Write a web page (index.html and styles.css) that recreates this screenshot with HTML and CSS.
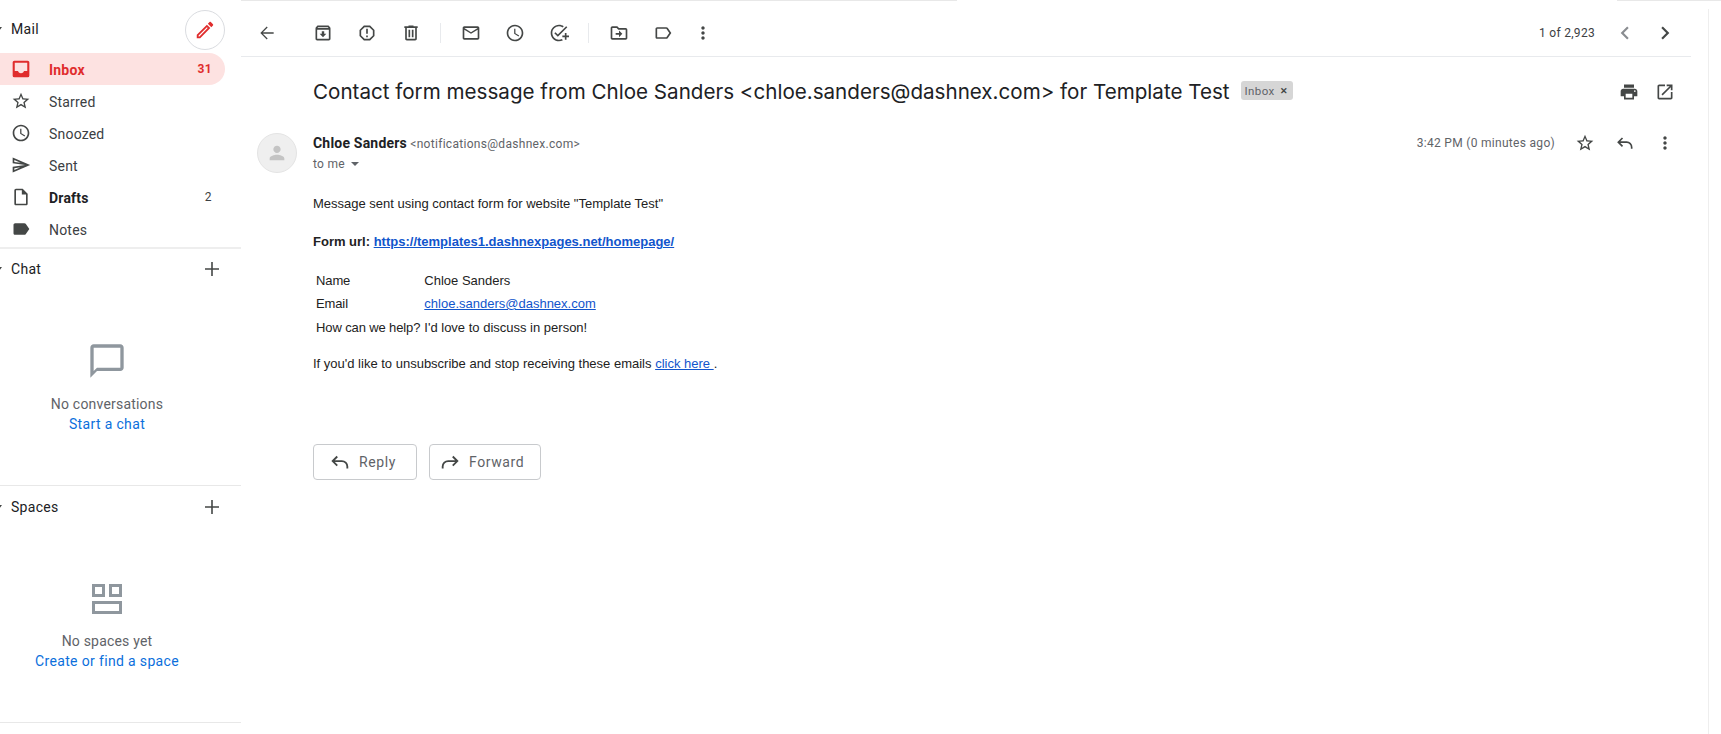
FILE: index.html
```html
<!DOCTYPE html>
<html lang="en">

<head>
    <meta charset="UTF-8">
    <meta name="viewport" content="width=device-width, initial-scale=1.0">
    <title>Contact form message</title>
    <link rel="stylesheet" href="styles.css">
</head>

<body>
    <div class="top-edge">
        <span class="edge-left"></span>
        <span class="edge-right"></span>
    </div>
    <div class="app">
        <aside class="sidebar">
            <div class="mail-head">
                <span class="caret"></span>
                <span class="section-title">Mail</span>
                <button class="compose">
                    <svg class="icon icon-red" viewBox="0 0 24 24"><path d="M3 17.25V21h3.75L17.81 9.94l-3.75-3.75L3 17.25zM5.900 19H5v-.9l9.060-9.060.9.9L5.900 19zM20.710 7.040c.39-.39.39-1.020 0-1.410l-2.340-2.340c-.39-.39-1.020-.39-1.410 0l-1.830 1.830 3.750 3.750 1.830-1.830z"/></svg>
                </button>
            </div>
            <nav class="nav">
                <a class="nav-row active">
                    <svg class="icon" viewBox="0 0 24 24"><path d="M20 2H4a2 2 0 0 0-2 2v16a2 2 0 0 0 2 2h16a2 2 0 0 0 2-2V4a2 2 0 0 0-2-2zm-.5 12.500h-4c0 1.500-1.500 2.500-3.500 2.500s-3.500-1-3.500-2.500h-4v-10h15z"/></svg>
                    <span class="nav-label">Inbox</span>
                    <span class="nav-count">31</span>
                </a>
                <a class="nav-row">
                    <svg class="icon" viewBox="0 0 24 24"><path d="M22 9.24l-7.19-.62L12 2 9.19 8.63 2 9.24l5.46 4.73L5.82 21 12 17.27 18.18 21l-1.63-7.03L22 9.24zM12 15.4l-3.76 2.27 1-4.28-3.32-2.88 4.38-.38L12 6.1l1.71 4.04 4.38.38-3.32 2.88 1 4.28L12 15.4z"/></svg>
                    <span class="nav-label">Starred</span>
                </a>
                <a class="nav-row">
                    <svg class="icon" viewBox="0 0 24 24"><path d="M11.99 2C6.47 2 2 6.48 2 12s4.47 10 9.99 10C17.52 22 22 17.52 22 12S17.52 2 11.99 2zM12 20c-4.42 0-8-3.58-8-8s3.58-8 8-8 8 3.58 8 8-3.58 8-8 8zm.5-13H11v6l5.25 3.15.75-1.23-4.5-2.67z"/></svg>
                    <span class="nav-label">Snoozed</span>
                </a>
                <a class="nav-row">
                    <svg class="icon" viewBox="0 0 24 24"><path d="M4 6.03l7.51 3.22-7.52-1 .01-2.22m7.5 8.72L4 17.97v-2.22l7.51-1M2.01 3L2 10l15 2-15 2 .01 7L23 12 2.01 3z"/></svg>
                    <span class="nav-label">Sent</span>
                </a>
                <a class="nav-row bold">
                    <svg class="icon" viewBox="0 0 24 24"><path d="M14 2H6c-1.1 0-2 .9-2 2v16c0 1.1.9 2 2 2h12c1.1 0 2-.9 2-2V8l-6-6zM6 20V4h7v5h5v11H6z"/></svg>
                    <span class="nav-label">Drafts</span>
                    <span class="nav-count">2</span>
                </a>
                <a class="nav-row">
                    <svg class="icon" viewBox="0 0 24 24"><path d="M17.63 5.84C17.27 5.33 16.67 5 16 5L5 5.01C3.9 5.01 3 5.9 3 7v10c0 1.1.9 1.99 2 1.99L16 19c.67 0 1.27-.33 1.63-.84L22 12l-4.37-6.16z"/></svg>
                    <span class="nav-label">Notes</span>
                </a>
            </nav>

            <section class="panel panel-chat">
                <div class="panel-head">
                    <span class="caret"></span>
                    <span class="section-title">Chat</span>
                    <svg class="icon plus" viewBox="0 0 24 24"><path d="M19 12.8h-6.200v6.200h-1.600v-6.200H5v-1.600h6.200V5h1.600v6.200H19z"/></svg>
                </div>
                <div class="empty">
                    <svg class="empty-icon" viewBox="0 0 24 24"><path d="M20 2H4c-1.100 0-2 .9-2 2v18l4-4h14c1.100 0 2-.9 2-2V4c0-1.100-.9-2-2-2zm0 14H6l-2 2V4h16v12z"/></svg>
                    <p class="empty-text">No conversations</p>
                    <a class="empty-link">Start a chat</a>
                </div>
            </section>

            <section class="panel panel-spaces">
                <div class="panel-head">
                    <span class="caret"></span>
                    <span class="section-title">Spaces</span>
                    <svg class="icon plus" viewBox="0 0 24 24"><path d="M19 12.8h-6.200v6.200h-1.600v-6.200H5v-1.600h6.200V5h1.600v6.200H19z"/></svg>
                </div>
                <div class="empty">
                    <svg class="spaces-icon" viewBox="0 0 30 30"><path d="M0 0h13v13H0zM3 3v7h7V3zM17 0h13v13H17zM20 3v7h7V3zM0 17h30v13H0zM3 20v7h24v-7z" fill-rule="evenodd"/></svg>
                    <p class="empty-text">No spaces yet</p>
                    <a class="empty-link">Create or find a space</a>
                </div>
            </section>
        </aside>

        <main class="main">
            <div class="toolbar">
                <button class="tool back"><svg class="icon" viewBox="0 0 24 24"><path d="M20 11.200H7L12.800 5.400 11.700 4.300 4 12l7.700 7.700 1.100-1.100L7 12.800h13z"/></svg></button>
                <button class="tool"><svg class="icon" viewBox="0 0 24 24"><path d="M20.540 5.230l-1.390-1.680C18.880 3.210 18.470 3 18 3H6c-.47 0-.88.210-1.160.55L3.460 5.230C3.170 5.570 3 6.020 3 6.500V19c0 1.100.9 2 2 2h14c1.100 0 2-.9 2-2V6.500c0-.48-.17-.93-.46-1.270zM6.240 5h11.520l.83 1H5.420l.82-1zM5 19V8h14v11H5zm8.450-9h-2.900v3H8l4 4 4-4h-2.550z"/></svg></button>
                <button class="tool"><svg class="icon" viewBox="0 0 24 24"><path d="M15.730 3H8.270L3 8.270v7.460L8.270 21h7.460L21 15.730V8.270L15.730 3zM19 14.900L14.900 19H9.100L5 14.900V9.100L9.100 5h5.800L19 9.100v5.800zM11 15h2v2h-2zm0-8h2v6h-2z"/></svg></button>
                <button class="tool"><svg class="icon" viewBox="0 0 24 24"><path d="M15 4V3H9v1H4v2h1v13c0 1.100.9 2 2 2h10c1.100 0 2-.9 2-2V6h1V4h-5zm2 15H7V6h10v13zM9 8h2v9H9zm4 0h2v9h-2z"/></svg></button>
                <span class="divider"></span>
                <button class="tool"><svg class="icon" viewBox="0 0 24 24"><path d="M20 4H4c-1.100 0-2 .9-2 2v12c0 1.100.9 2 2 2h16c1.100 0 2-.9 2-2V6c0-1.100-.9-2-2-2zm0 14H4V8l8 5 8-5v10zm-8-7L4 6h16l-8 5z"/></svg></button>
                <button class="tool"><svg class="icon" viewBox="0 0 24 24"><path d="M11.990 2C6.470 2 2 6.480 2 12s4.470 10 9.990 10C17.520 22 22 17.520 22 12S17.520 2 11.990 2zM12 20c-4.420 0-8-3.580-8-8s3.580-8 8-8 8 3.580 8 8-3.580 8-8 8zm.5-13H11v6l5.250 3.150.75-1.230-4.500-2.670z"/></svg></button>
                <button class="tool"><svg class="icon" viewBox="0 0 24 24"><path d="M22 5.180L10.590 16.600l-4.240-4.240 1.410-1.410 2.830 2.830 10-10L22 5.180zM12 20c-4.410 0-8-3.590-8-8s3.590-8 8-8c1.570 0 3.040.46 4.280 1.250l1.450-1.450C16.100 2.670 14.130 2 12 2 6.480 2 2 6.480 2 12s4.480 10 10 10c1.730 0 3.360-.44 4.780-1.220l-1.500-1.500c-1 .46-2.110.72-3.280.72zm7-5h-3v2h3v3h2v-3h3v-2h-3v-3h-2v3z"/></svg></button>
                <span class="divider"></span>
                <button class="tool"><svg class="icon" viewBox="0 0 24 24"><path d="M20 6h-8l-2-2H4c-1.100 0-2 .9-2 2v12c0 1.100.9 2 2 2h16c1.100 0 2-.9 2-2V8c0-1.100-.9-2-2-2zm0 12H4V6h5.170l2 2H20v10zm-8-4H8v-2h4V9l4 4-4 4v-3z"/></svg></button>
                <button class="tool"><svg class="icon" viewBox="0 0 24 24"><path d="M17.630 5.840C17.270 5.330 16.670 5 16 5L5 5.010C3.900 5.010 3 5.900 3 7v10c0 1.100.9 1.990 2 1.990L16 19c.67 0 1.270-.33 1.630-.84L22 12l-4.370-6.160zM16 17H5V7h11l3.550 5L16 17z"/></svg></button>
                <button class="tool more"><svg class="icon" viewBox="0 0 24 24"><path d="M12 8c1.100 0 2-.9 2-2s-.9-2-2-2-2 .9-2 2 .9 2 2 2zm0 2c-1.100 0-2 .9-2 2s.9 2 2 2 2-.9 2-2-.9-2-2-2zm0 6c-1.100 0-2 .9-2 2s.9 2 2 2 2-.9 2-2-.9-2-2-2z"/></svg></button>
                <span class="pager">1 of 2,923</span>
                <button class="tool chevron tool-dim"><svg class="icon" viewBox="0 0 24 24"><path d="M15.410 7.410L14 6l-6 6 6 6 1.410-1.410L10.830 12z"/></svg></button>
                <button class="tool chevron pager-next"><svg class="icon" viewBox="0 0 24 24"><path d="M10 6L8.590 7.410 13.170 12l-4.580 4.590L10 18l6-6z"/></svg></button>
            </div>

            <div class="subject-row">
                <h1 class="subject">Contact form message from Chloe Sanders &lt;chloe.sanders@dashnex.com&gt; for Template Test</h1>
                <span class="badge">Inbox <span class="badge-x">&#10005;</span></span>
                <svg class="icon print" viewBox="0 0 24 24"><path d="M19 8H5c-1.660 0-3 1.340-3 3v6h4v4h12v-4h4v-6c0-1.660-1.340-3-3-3zm-3 11H8v-5h8v5zm3-7c-.55 0-1-.45-1-1s.45-1 1-1 1 .45 1 1-.45 1-1 1zm-1-9H6v4h12V3z"/></svg>
                <svg class="icon popout" viewBox="0 0 24 24"><path d="M19 19H5V5h7V3H5c-1.110 0-2 .9-2 2v14c0 1.100.89 2 2 2h14c1.100 0 2-.9 2-2v-7h-2v7zM14 3v2h3.590l-9.830 9.830 1.410 1.410L19 6.410V10h2V3h-7z"/></svg>
            </div>

            <div class="message">
                <div class="avatar">
                    <svg viewBox="0 0 24 24"><path d="M12 12c2.210 0 4-1.790 4-4s-1.790-4-4-4-4 1.790-4 4 1.790 4 4 4zm0 2c-2.670 0-8 1.340-8 4v2h16v-2c0-2.660-5.330-4-8-4z"/></svg>
                </div>
                <div class="msg-col">
                    <div class="msg-head">
                        <div class="sender">
                            <div class="from"><strong>Chloe Sanders</strong> <span class="addr">&lt;notifications@dashnex.com&gt;</span></div>
                            <div class="to">to me <span class="to-caret"></span></div>
                        </div>
                        <span class="time">3:42 PM (0 minutes ago)</span>
                        <svg class="icon msg-star" viewBox="0 0 24 24"><path d="M22 9.240l-7.190-.62L12 2 9.190 8.630 2 9.240l5.460 4.730L5.820 21 12 17.270 18.180 21l-1.630-7.030L22 9.240zM12 15.400l-3.760 2.270 1-4.280-3.320-2.880 4.380-.38L12 6.100l1.710 4.040 4.380.38-3.320 2.880 1 4.280L12 15.400z"/></svg>
                        <svg class="icon msg-reply" viewBox="0 0 24 24"><path d="M9 6L4 11l5 5M4 11h10a6 6 0 0 1 6 6v2" fill="none" stroke="currentColor" stroke-width="2"/></svg>
                        <svg class="icon msg-more" viewBox="0 0 24 24"><path d="M12 8c1.100 0 2-.9 2-2s-.9-2-2-2-2 .9-2 2 .9 2 2 2zm0 2c-1.100 0-2 .9-2 2s.9 2 2 2 2-.9 2-2-.9-2-2-2zm0 6c-1.100 0-2 .9-2 2s.9 2 2 2 2-.9 2-2-.9-2-2-2z"/></svg>
                    </div>

                    <div class="mail-body">
                        <p class="line-intro">Message sent using contact form for website "Template Test"</p>
                        <p class="line-url"><b>Form url: <a href="#">https://templates1.dashnexpages.net/homepage/</a></b></p>
                        <table class="fields">
                            <tr class="row-name">
                                <td>Name</td>
                                <td>Chloe Sanders</td>
                            </tr>
                            <tr class="row-email">
                                <td>Email</td>
                                <td><a href="#">chloe.sanders@dashnex.com</a></td>
                            </tr>
                            <tr>
                                <td>How can we help?</td>
                                <td>I'd love to discuss in person!</td>
                            </tr>
                        </table>
                        <p class="line-unsub">If you'd like to unsubscribe and stop receiving these emails <a href="#">click here </a>.</p>
                    </div>

                    <div class="actions">
                        <button class="action-btn btn-reply">
                            <svg class="icon" viewBox="0 0 24 24"><path d="M9 6L4 11l5 5M4 11h10a6 6 0 0 1 6 6v2" fill="none" stroke="currentColor" stroke-width="2"/></svg>
                            Reply
                        </button>
                        <button class="action-btn btn-forward">
                            <svg class="icon" viewBox="0 0 24 24"><path d="M15 6l5 5-5 5M20 11H10a6 6 0 0 0-6 6v2" fill="none" stroke="currentColor" stroke-width="2"/></svg>
                            Forward
                        </button>
                    </div>
                </div>
            </div>
        </main>

        <div class="rail"></div>
    </div>
</body>

</html>
```

FILE: styles.css
```css
html,
body {
    margin: 0;
    padding: 0;
    height: 100%;
    overflow: hidden;
    background: #fff;
    font-family: "Roboto", "Liberation Sans", sans-serif;
    color: #202124;
}

button {
    border: none;
    background: none;
    padding: 0;
    font-family: inherit;
    cursor: pointer;
}

p {
    margin: 0;
}

.icon {
    display: block;
    width: 24px;
    height: 24px;
    flex: none;
    fill: currentColor;
}

.icon-red {
    color: #e02d2d;
}

.top-edge {
    display: flex;
    height: 1px;
}

.edge-left {
    width: 716px;
    margin-left: 241px;
    background: #e8e8e8;
}

.edge-right {
    width: 104px;
    margin-left: auto;
    background: #e8e8e8;
}

.app {
    display: flex;
    height: 733px;
}

/* left column */
.sidebar {
    width: 241px;
    flex: none;
    display: flex;
    flex-direction: column;
}

.caret {
    width: 0;
    height: 0;
    margin-left: -4px;
    margin-right: 9px;
    border-left: 3.5px solid transparent;
    border-right: 3.5px solid transparent;
    border-top: 4px solid #444746;
    flex: none;
}

.section-title {
    font-size: 14px;
    letter-spacing: 0.3px;
    color: #202124;
}

.mail-head {
    display: flex;
    align-items: center;
    height: 52px;
    padding-top: 3px;
    box-sizing: border-box;
    padding-right: 16px;
}

.compose {
    margin-left: auto;
    width: 40px;
    height: 40px;
    margin-top: 2px;
    border: 1px solid #dadce0;
    border-radius: 50%;
    display: flex;
    align-items: center;
    justify-content: center;
}

.compose .icon {
    width: 22px;
    height: 22px;
}

.nav {
    width: 225px;
    display: flex;
    flex-direction: column;
}

.nav-row {
    display: flex;
    align-items: center;
    height: 32px;
    padding: 0 13px 0 11px;
    font-size: 14px;
    letter-spacing: 0.2px;
    color: #3c4043;
}

.nav-row .icon {
    width: 20px;
    height: 20px;
    margin-right: 18px;
    color: #444746;
}

.nav-label {
    margin-top: 1px;
}

.nav-count {
    margin-left: auto;
    font-size: 12px;
    letter-spacing: 0.4px;
}

.nav-row.active {
    background: #fde2e1;
    border-radius: 0 16px 16px 0;
    color: #e02d2d;
    font-weight: 700;
}

.nav-row.active .icon {
    color: #e02d2d;
}

.nav-row.bold {
    font-weight: 700;
    color: #202124;
}

.nav-row.bold .nav-count {
    font-weight: 400;
    color: #3c4043;
}

.panel {
    display: flex;
    flex-direction: column;
    border-top: 2px solid #eeeeee;
}

.panel-chat {
    height: 238px;
    margin-top: 2px;
    box-sizing: border-box;
}

.panel-spaces {
    height: 238px;
    box-sizing: border-box;
    border-top: 1px solid #e8e8e8;
    border-bottom: 1px solid #e8e8e8;
}

.panel-head {
    display: flex;
    align-items: center;
    height: 40px;
    padding-right: 17px;
}

.panel-spaces .panel-head {
    height: 41px;
}

.plus {
    margin-left: auto;
    color: #444746;
}

.empty {
    width: 214px;
    display: flex;
    flex-direction: column;
    align-items: center;
    font-size: 14px;
    letter-spacing: 0.2px;
    line-height: 20px;
}

.empty-icon {
    width: 40px;
    height: 40px;
    margin-top: 52px;
    fill: #8f979e;
}

.spaces-icon {
    width: 30px;
    height: 30px;
    margin-top: 57px;
    fill: #8f979e;
}

.empty-text {
    margin-top: 13px;
    color: #5f6368;
}

.spaces-icon + .empty-text {
    margin-top: 17px;
}

.empty-link {
    letter-spacing: 0.35px;
    color: #0b6fdc;
}

/* main column */
.main {
    width: 1450px;
    flex: none;
}

.toolbar {
    display: flex;
    align-items: center;
    height: 56px;
    padding: 9px 0 0 4px;
    box-sizing: border-box;
    border-bottom: 1px solid #e8eaed;
    color: #444746;
}

.tool {
    width: 44px;
    height: 40px;
    display: flex;
    align-items: center;
    justify-content: center;
    color: #444746;
}

.tool .icon {
    width: 20px;
    height: 20px;
}

.tool.chevron .icon {
    width: 26px;
    height: 26px;
}

.back {
    margin-right: 12px;
}

.divider {
    width: 1px;
    height: 20px;
    margin: 0 8px 0 7px;
    background: #e8eaed;
}

.more {
    margin-left: -4px;
}

.pager {
    margin-left: auto;
    margin-right: 8px;
    font-size: 12px;
    letter-spacing: 0.3px;
    color: #3c4043;
}

.tool-dim {
    color: #8a8d91;
}

.pager-next {
    margin-left: -4px;
    margin-right: 4px;
}

.subject-row {
    display: flex;
    align-items: center;
    height: 69px;
    padding-left: 72px;
    padding-right: 16px;
    color: #444746;
}

.subject {
    margin: 0;
    font-family: "Inter", "Roboto", sans-serif;
    font-size: 20.600px;
    font-weight: 400;
    color: #202124;
    white-space: nowrap;
}

.badge {
    display: flex;
    align-items: center;
    gap: 5px;
    height: 19px;
    margin-left: 11px;
    margin-bottom: 2px;
    padding: 0 5px 0 4px;
    background: #d6d6d6;
    border-radius: 3px;
    font-size: 11.500px;
    letter-spacing: 0.4px;
    color: #5f6368;
}

.badge-x {
    font-size: 9px;
    font-weight: 700;
    color: #444746;
}

.print {
    margin-left: auto;
    width: 20px;
    height: 20px;
}

.popout {
    width: 20px;
    height: 20px;
    margin-left: 16px;
}

.message {
    display: flex;
    padding-left: 16px;
}

.avatar {
    width: 40px;
    height: 40px;
    box-sizing: border-box;
    margin-top: 7px;
    margin-right: 16px;
    border: 1px solid #e4e4e4;
    border-radius: 50%;
    background: #efefef;
    display: flex;
    align-items: center;
    justify-content: center;
    flex: none;
}

.avatar svg {
    width: 22px;
    height: 22px;
    fill: #c4c4c4;
}

.msg-col {
    flex: 1;
}

.msg-head {
    display: flex;
    align-items: flex-start;
    height: 67px;
    padding-top: 7px;
    box-sizing: border-box;
    color: #444746;
}

.sender {
    margin-right: auto;
}

.from {
    font-size: 12px;
    line-height: 20px;
    color: #5f6368;
    letter-spacing: 0.3px;
}

.from strong {
    font-size: 14px;
    color: #202124;
    letter-spacing: 0.2px;
}

.to {
    display: flex;
    align-items: center;
    gap: 6px;
    font-size: 12px;
    line-height: 20px;
    letter-spacing: 0.3px;
    color: #5f6368;
}

.to-caret {
    width: 0;
    height: 0;
    border-left: 4px solid transparent;
    border-right: 4px solid transparent;
    border-top: 4px solid #5f6368;
}

.time {
    font-size: 12px;
    line-height: 20px;
    letter-spacing: 0.3px;
    color: #5f6368;
    margin-right: 20px;
}

.msg-star,
.msg-reply,
.msg-more {
    width: 20px;
    height: 20px;
}

.msg-reply {
    margin-left: 20px;
}

.msg-more {
    margin-left: 20px;
    margin-right: 16px;
}

.mail-body {
    font-family: "Liberation Sans", Arial, sans-serif;
    font-size: 13px;
    line-height: 15px;
    color: #222222;
}

.mail-body a {
    color: #1155cc;
}

.line-intro {
    margin-top: 3px;
}

.line-url {
    margin-top: 23px;
}

.fields {
    margin-top: 19px;
    border-spacing: 2px;
    line-height: 15px;
}

.fields td {
    padding: 3px 1px 3.500px;
}

.fields td:first-child {
    padding-right: 2px;
    letter-spacing: -0.12px;
}

.fields td:last-child {
    padding-left: 0;
}

.fields .row-name td {
    padding-bottom: 3px;
}

.fields .row-email td {
    padding-bottom: 4px;
}

.line-unsub {
    margin-top: 15px;
}

.actions {
    display: flex;
    gap: 12px;
    margin-top: 73px;
}

.action-btn {
    display: flex;
    align-items: center;
    height: 36px;
    border: 1px solid #c8cacd;
    border-radius: 4px;
    font-size: 14px;
    letter-spacing: 0.6px;
    color: #5f6368;
}

.btn-reply {
    padding: 0 20px 0 15px;
}

.btn-forward {
    padding: 0 16px 0 9px;
}

.action-btn .icon {
    width: 22px;
    height: 22px;
    margin-right: 8px;
    color: #444746;
}

.rail {
    width: 0;
    margin-left: 17px;
    margin-top: 8px;
    border-left: 1px solid #eeeeee;
}
```
